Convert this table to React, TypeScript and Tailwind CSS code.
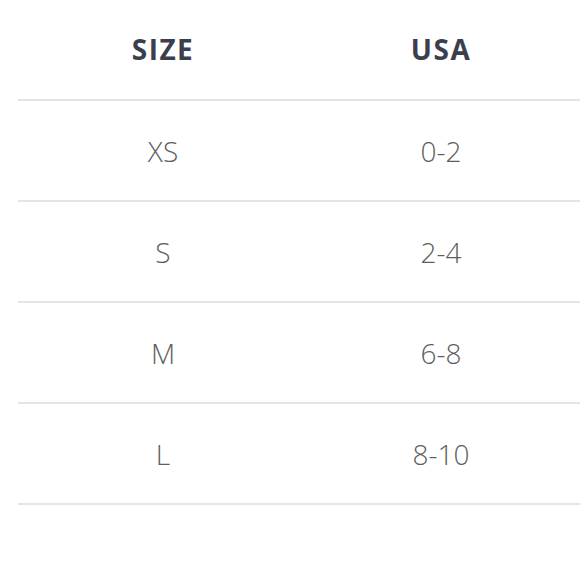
import React from 'react';

const rows = [
  { size: 'XS', usa: '0-2' },
  { size: 'S', usa: '2-4' },
  { size: 'M', usa: '6-8' },
  { size: 'L', usa: '8-10' },
];

const App: React.FC = () => {
  return (
    <div className="w-[580px] h-[580px] bg-white overflow-hidden pl-[18px] font-['Open_Sans',sans-serif]">
      <div className="grid grid-cols-[290px_266px] h-[101px] items-center border-b-2 border-[#e5e4ea] pb-[2px]">
        <span className="text-center text-[28px] font-bold text-[#3b3e4b] tracking-[1.5px]">SIZE</span>
        <span className="text-center text-[28px] font-bold text-[#3b3e4b] tracking-[1.5px]">USA</span>
      </div>
      {rows.map((r) => (
        <div key={r.size} className="grid grid-cols-[290px_266px] h-[101px] items-center border-b-2 border-[#e5e4ea]">
          <span className="text-center text-[28px] font-light text-[#5e5e5e]">{r.size}</span>
          <span className="text-center text-[28px] font-light text-[#5e5e5e]">{r.usa}</span>
        </div>
      ))}
    </div>
  );
};

export default App;
